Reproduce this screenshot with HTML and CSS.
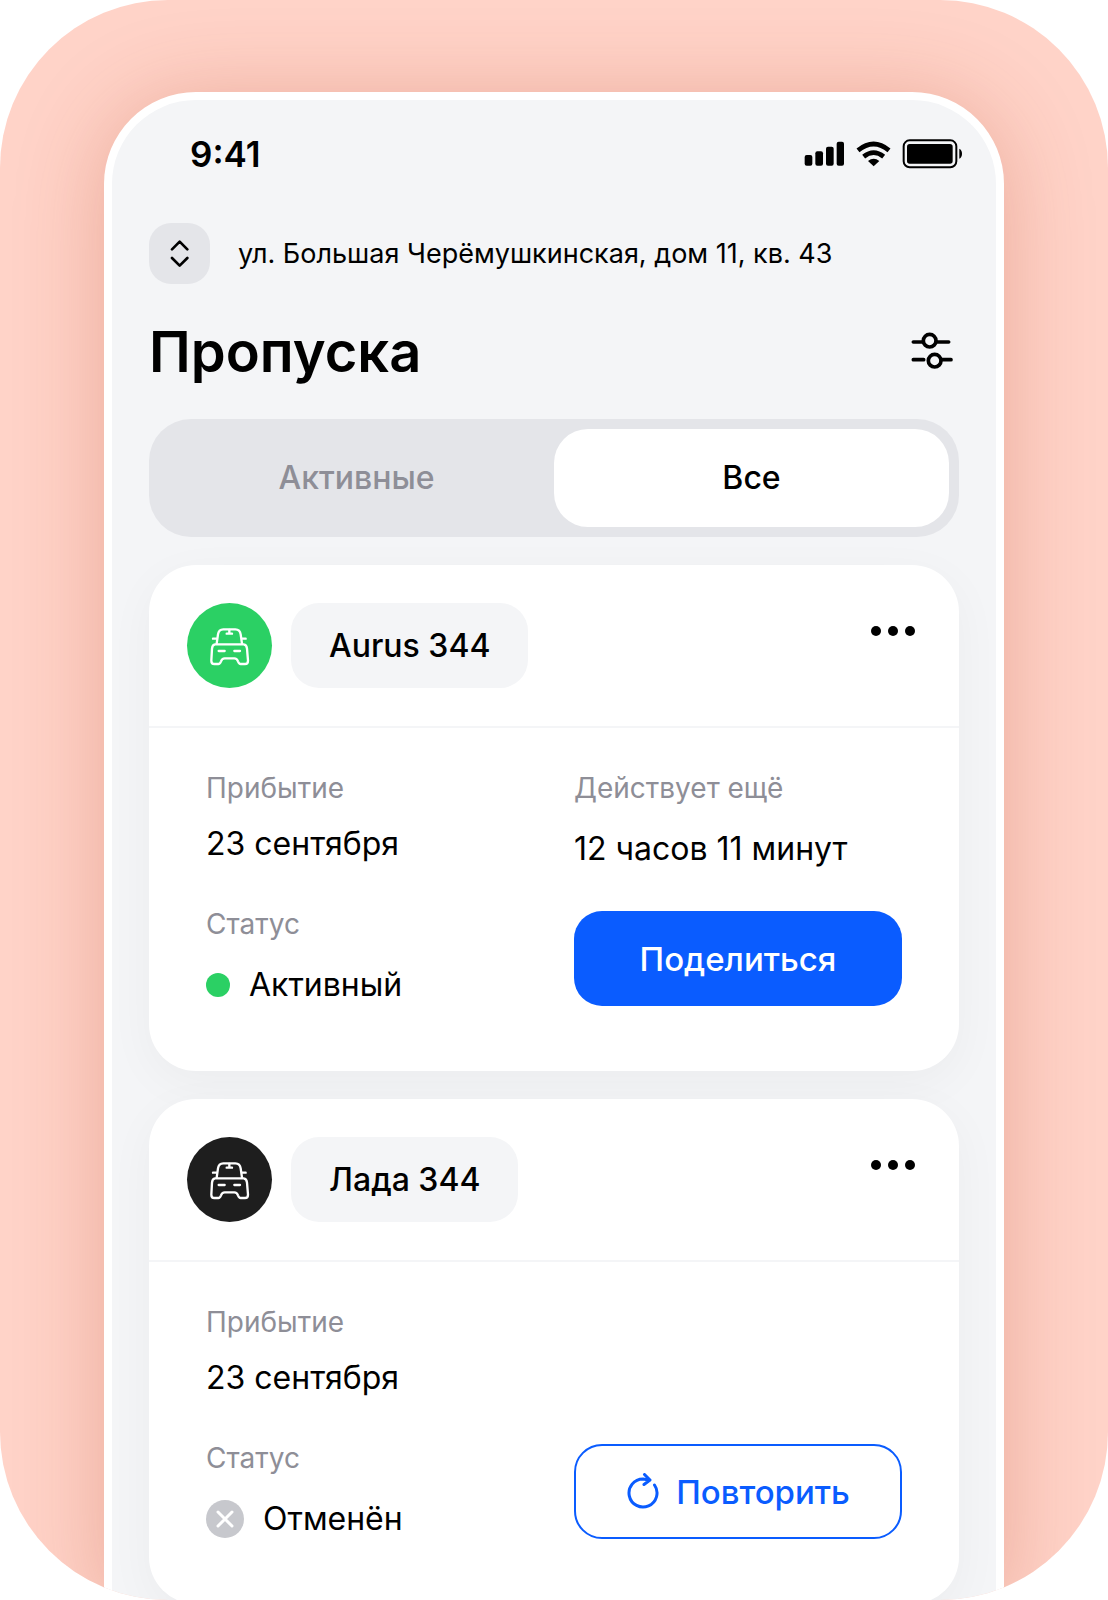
FILE: index.html
```html
<!DOCTYPE html>
<html lang="ru">
<head>
<meta charset="utf-8">
<meta name="viewport" content="width=device-width, initial-scale=1">
<title>Пропуска</title>
<link rel="stylesheet" href="styles.css">
</head>
<body>
<svg class="sprite" aria-hidden="true">
  <symbol id="car" viewBox="0 0 126 126">
    <g fill="none" stroke="currentColor" stroke-width="7" stroke-linecap="round" stroke-linejoin="round">
      <path d="M23 56L27 28Q29 13 43 13H79Q93 13 95 28L99 56"/>
      <path d="M18 58H104Q113 59 114 71L117 107Q117 117 108 117H95Q90 117 87 109Q84 100 76 100H47Q39 100 36 109Q33 117 28 117H16Q7 117 7 107L9 71Q10 59 18 58Z"/>
      <path d="M12 41H22M100 41H110M29 78H47M76 78H93M61 15V25M53 26H69"/>
    </g>
  </symbol>
  <symbol id="dots" viewBox="0 0 44 10">
    <circle cx="5" cy="5" r="5"/><circle cx="22" cy="5" r="5"/><circle cx="39" cy="5" r="5"/>
  </symbol>
</svg>
<div class="stage">
  <div class="phone">
    <div class="status-bar">
      <span class="time">9:41</span>
      <div class="indicators">
        <svg width="41" height="26" viewBox="0 0 123 78" aria-hidden="true">
          <rect x="2" y="42" width="23" height="32" rx="6"/><rect x="34" y="31" width="23" height="43" rx="6"/><rect x="66" y="17" width="23" height="57" rx="6"/><rect x="98" y="2" width="22" height="72" rx="6"/>
        </svg>
        <svg width="35" height="26" viewBox="0 0 105 78" aria-hidden="true">
          <path d="M6 28Q53 -10 99 28M23 47Q53 23 83 47" fill="none" stroke="#000" stroke-width="14"/>
          <path d="M36 60Q53 47 70 60L53 76Z"/>
        </svg>
        <svg width="61" height="30" viewBox="0 0 183 90" aria-hidden="true">
          <rect x="5" y="4" width="158" height="81" rx="18" fill="none" stroke="#000" stroke-width="6"/>
          <rect x="15" y="15" width="137" height="59" rx="8"/>
          <path d="M172 29Q180 33 180 44T172 59Z"/>
        </svg>
      </div>
    </div>
    <main class="screen">
      <div class="address">
        <button class="switcher" type="button" aria-label="Сменить адрес">
          <svg width="20" height="28" viewBox="0 0 60 84" fill="none" stroke="#000" stroke-width="8" stroke-linecap="round" stroke-linejoin="round"><path d="M6 28L29 5L52 28M6 54L29 77L52 54"/></svg>
        </button>
        <span>ул. Большая Черёмушкинская, дом 11, кв. 43</span>
      </div>
      <header class="heading">
        <h1>Пропуска</h1>
        <button class="filter" type="button" aria-label="Фильтр">
          <svg width="43" height="37" viewBox="0 0 129 111" fill="none" stroke="#000" stroke-width="11" stroke-linecap="round"><path d="M7 30H35M79 30H113M7 83H38M95 83H120"/><circle cx="56" cy="26" r="19"/><circle cx="71" cy="86" r="19"/></svg>
        </button>
      </header>
      <div class="tabs">
        <button class="tab" type="button">Активные</button>
        <button class="tab tab-active" type="button" aria-pressed="true">Все</button>
      </div>
      <div class="passes">
        <article class="card">
          <div class="card-head">
            <span class="avatar avatar-green"><svg width="42" height="42" aria-hidden="true"><use href="#car"/></svg></span>
            <h2 class="plate">Aurus 344</h2>
            <button class="more" type="button" aria-label="Ещё"><svg width="44" height="10"><use href="#dots"/></svg></button>
          </div>
          <div class="card-body">
            <dl class="column">
              <div class="field field-tight"><dt>Прибытие</dt><dd>23 сентября</dd></div>
              <div class="field"><dt>Статус</dt><dd class="state"><span class="dot"></span>Активный</dd></div>
            </dl>
            <div class="column">
              <dl class="field"><dt>Действует ещё</dt><dd>12 часов 11 минут</dd></dl>
              <button class="action action-primary" type="button">Поделиться</button>
            </div>
          </div>
        </article>
        <article class="card">
          <div class="card-head">
            <span class="avatar avatar-dark"><svg width="42" height="42" aria-hidden="true"><use href="#car"/></svg></span>
            <h2 class="plate">Лада 344</h2>
            <button class="more" type="button" aria-label="Ещё"><svg width="44" height="10"><use href="#dots"/></svg></button>
          </div>
          <div class="card-body">
            <dl class="column">
              <div class="field field-tight"><dt>Прибытие</dt><dd>23 сентября</dd></div>
              <div class="field"><dt>Статус</dt><dd class="state"><svg width="38" height="38" viewBox="0 0 38 38" aria-hidden="true"><circle cx="19" cy="19" r="19" fill="#c7c8cd"/><path d="M12 12L26 26M26 12L12 26" stroke="#fff" stroke-width="3" stroke-linecap="round"/></svg>Отменён</dd></div>
            </dl>
            <div class="column column-end">
              <button class="action action-outline" type="button">
                <svg width="34" height="38" viewBox="0 0 34 38" fill="none" stroke="currentColor" stroke-width="3" stroke-linecap="round" stroke-linejoin="round" aria-hidden="true"><path d="M28.500 12A14 14 0 1 1 17 6L23 7M18.500 1.500L24 7L18 11.500"/></svg>
                Повторить
              </button>
            </div>
          </div>
        </article>
      </div>
    </main>
  </div>
</div>
</body>
</html>
```
FILE: styles.css
```css
* { box-sizing: border-box; }
body {
  margin: 0;
  background: #fff;
  color: #000;
  font-family: Inter, "Noto Sans", sans-serif;
  font-size: 32px;
  line-height: 40px;
}
h1, h2, dl, dd { margin: 0; }
button {
  border: 0;
  padding: 0;
  background: none;
  color: inherit;
  font: inherit;
  cursor: pointer;
}
svg { display: block; flex: none; }
.sprite { position: absolute; width: 0; height: 0; }

.stage {
  min-height: 100vh;
  padding: 92px 104px 0;
  overflow: hidden;
  border-radius: 168px;
  background: #ffd3c8;
}
.phone {
  margin-bottom: -5px;
  border: 8px solid #fff;
  border-bottom: 0;
  border-radius: 92px 92px 0 0;
  background: #f4f5f7;
  box-shadow: 0 8px 88px rgba(178, 60, 30, .28);
}

.status-bar {
  display: flex;
  align-items: center;
  justify-content: space-between;
  padding: 32px 33px 0 78px;
}
.time { font-size: 35px; line-height: 44px; font-weight: 600; }
.indicators { display: flex; align-items: center; gap: 11px; }

.screen { padding: 47px 37px 0; }
.address {
  display: flex;
  align-items: center;
  gap: 28px;
  font-size: 27px;
  line-height: 36px;
}
.switcher {
  display: grid;
  place-items: center;
  flex: none;
  width: 61px;
  height: 61px;
  border-radius: 22px;
  background: #e4e5e9;
}
.heading {
  display: flex;
  align-items: flex-start;
  justify-content: space-between;
  margin-top: 36px;
}
h1 { font-size: 56px; line-height: 64px; font-weight: 600; }
.filter { display: grid; place-items: center; width: 53px; height: 60px; }

.tabs {
  display: grid;
  grid-template-columns: 1fr 1fr;
  margin-top: 35px;
  padding: 10px;
  border-radius: 42px;
  background: #e4e5e9;
}
.tab { height: 98px; border-radius: 34px; color: #8e8e97; font-weight: 500; }
.tab-active { background: #fff; color: #000; }

.passes { display: grid; gap: 28px; margin-top: 28px; }
.card {
  border-radius: 47px;
  background: #fff;
  box-shadow: 0 12px 48px rgba(0, 0, 0, .04);
}
.card-head {
  display: flex;
  gap: 19px;
  padding: 38px;
  border-bottom: 2px solid #f4f5f7;
}
.avatar {
  display: grid;
  place-items: center;
  width: 85px;
  height: 85px;
  border-radius: 50%;
  color: #fff;
}
.avatar-green { background: #2bd064; }
.avatar-dark { background: #1e1e1e; }
.plate {
  padding: 0 38px;
  border-radius: 28px;
  background: #f4f5f7;
  font-size: 32px;
  line-height: 85px;
  font-weight: 500;
}
.more {
  display: grid;
  place-items: center;
  width: 56px;
  height: 56px;
  margin-left: auto;
}

.card-body {
  display: grid;
  grid-template-columns: 1fr 1fr;
  gap: 40px;
  padding: 42px 57px 65px;
}
.column { display: flex; flex-direction: column; gap: 42px; }
.column-end { justify-content: flex-end; }
.field { display: grid; gap: 23px; }
.field-tight { gap: 18px; }
dt { color: #8e8e97; font-size: 28px; line-height: 36px; }
.state { display: flex; align-items: center; gap: 19px; }
.dot { width: 24px; height: 24px; border-radius: 50%; background: #2bd064; }
.action {
  display: flex;
  align-items: center;
  justify-content: center;
  gap: 16px;
  height: 95px;
  border-radius: 28px;
  font-size: 33px;
  font-weight: 500;
}
.action-primary { background: #0a5cff; color: #fff; }
.action-outline { border: 2px solid #0a5cff; color: #0a5cff; }
```
